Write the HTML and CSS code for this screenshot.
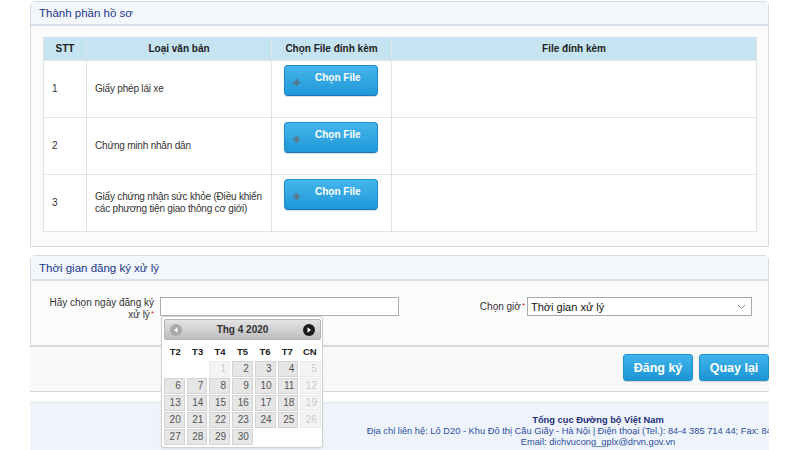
FILE: index.html
```html
<!DOCTYPE html>
<html lang="vi">
<head>
<meta charset="utf-8">
<title>Thành phần hồ sơ</title>
<link rel="stylesheet" href="styles.css">
</head>
<body>
<div class="page">
  <section class="panel panel-docs">
    <div class="panel-head">Thành phần hồ sơ</div>
    <div class="panel-body">
      <table class="docs">
        <thead>
          <tr>
            <th class="c-stt">STT</th>
            <th class="c-type">Loại văn bản</th>
            <th class="c-pick">Chọn File đính kèm</th>
            <th class="c-file">File đính kèm</th>
          </tr>
        </thead>
        <tbody>
          <tr>
            <td class="c-stt">1</td>
            <td class="c-type">Giấy phép lái xe</td>
            <td class="c-pick"><div class="btn-file" role="button"><svg class="plus" width="7" height="7" viewBox="0 0 7 7"><rect x="2.5" y="0" width="2" height="7"/><rect x="0" y="2.5" width="7" height="2"/></svg><span>Chọn File</span></div></td>
            <td class="c-file"></td>
          </tr>
          <tr>
            <td class="c-stt">2</td>
            <td class="c-type">Chứng minh nhân dân</td>
            <td class="c-pick"><div class="btn-file" role="button"><svg class="plus" width="7" height="7" viewBox="0 0 7 7"><rect x="2.5" y="0" width="2" height="7"/><rect x="0" y="2.5" width="7" height="2"/></svg><span>Chọn File</span></div></td>
            <td class="c-file"></td>
          </tr>
          <tr>
            <td class="c-stt">3</td>
            <td class="c-type">Giấy chứng nhận sức khỏe (Điều khiển các phương tiện giao thông cơ giới)</td>
            <td class="c-pick"><div class="btn-file" role="button"><svg class="plus" width="7" height="7" viewBox="0 0 7 7"><rect x="2.5" y="0" width="2" height="7"/><rect x="0" y="2.5" width="7" height="2"/></svg><span>Chọn File</span></div></td>
            <td class="c-file"></td>
          </tr>
        </tbody>
      </table>
    </div>
  </section>

  <section class="panel panel-time">
    <div class="panel-head">Thời gian đăng ký xử lý</div>
    <div class="panel-body form-row">
      <label class="lbl-date">Hãy chọn ngày đăng ký xử lý<span class="req">*</span></label>
      <div class="date-wrap">
        <input class="inp-date" type="text">
        <div class="calendar">
          <div class="cal-head">
            <span class="cal-nav prev"><svg width="12" height="12" viewBox="0 0 12 12"><circle cx="6" cy="6" r="6" fill="#a9a9a9"/><path d="M7.5 3.2 L4 6 L7.5 8.8 Z" fill="#fff"/></svg></span>
            <span class="cal-title">Thg 4 2020</span>
            <span class="cal-nav next"><svg width="12" height="12" viewBox="0 0 12 12"><circle cx="6" cy="6" r="6" fill="#1b1b1b"/><path d="M4.5 3.2 L8 6 L4.5 8.8 Z" fill="#fff"/></svg></span>
          </div>
          <div class="cal-days">
            <span>T2</span><span>T3</span><span>T4</span><span>T5</span><span>T6</span><span>T7</span><span>CN</span>
          </div>
          <div class="cal-grid">
            <span class="empty"></span><span class="empty"></span><span class="off">1</span><span>2</span><span>3</span><span>4</span><span class="off">5</span>
            <span>6</span><span>7</span><span>8</span><span>9</span><span>10</span><span>11</span><span class="off">12</span>
            <span>13</span><span>14</span><span>15</span><span>16</span><span>17</span><span>18</span><span class="off">19</span>
            <span>20</span><span>21</span><span>22</span><span>23</span><span>24</span><span>25</span><span class="off">26</span>
            <span>27</span><span>28</span><span>29</span><span>30</span><span class="empty"></span><span class="empty"></span><span class="empty"></span>
          </div>
        </div>
      </div>
      <label class="lbl-time">Chọn giờ<span class="req">*</span></label>
      <div class="sel-time"><span>Thời gian xử lý</span><svg width="9" height="6" viewBox="0 0 9 6"><path d="M1 1 L4.5 4.5 L8 1" fill="none" stroke="#888" stroke-width="1"/></svg></div>
    </div>
  </section>

  <div class="actions">
    <button class="btn-main">Đăng ký</button>
    <button class="btn-main">Quay lại</button>
  </div>

  <footer class="footer">
    <div class="footer-inner">
      <div class="f-title">Tổng cục Đường bộ Việt Nam</div>
      <div>Địa chỉ liên hệ: Lô D20 - Khu Đô thị Cầu Giấy - Hà Nội | Điện thoại (Tel.): 84-4 385 714 44; Fax: 84-4 385 714 40</div>
      <div>Email: dichvucong_gplx@drvn.gov.vn</div>
    </div>
  </footer>
</div>
</body>
</html>
```

FILE: styles.css
```css
html, body {
  margin: 0;
  padding: 0;
  background: #ffffff;
}
body {
  font-family: "Liberation Sans", Arial, sans-serif;
  font-size: 10px;
  color: #333333;
  overflow: hidden;
}
.page {
  margin-left: 30px;
  width: 739px;
  padding-top: 1px;
}
.panel {
  border: 1px solid #d3dbe5;
  border-radius: 5px 5px 0 0;
  background: #fbfbfb;
}
.panel-head {
  height: 22px;
  line-height: 23px;
  padding-left: 8px;
  background: #f3f6fa;
  border-bottom: 2px solid #d7dfe9;
  color: #22368a;
  font-size: 11.5px;
}
.panel-docs .panel-body {
  padding: 11px 11px 14px 12px;
}
table.docs {
  width: 714px;
  border-collapse: collapse;
  background: #ffffff;
}
table.docs th {
  background: #c5e3f1;
  height: 23px;
  padding: 0;
  font-weight: bold;
  font-size: 10px;
  color: #222;
  border: 1px solid #dfe6ea;
  border-top: none;
  text-align: center;
}
table.docs td {
  height: 56px;
  border: 1px solid #e3e3e3;
  padding: 0 1px 0 8px;
  vertical-align: middle;
  line-height: 12px;
  font-size: 10px;
}
table.docs td.c-type {
  letter-spacing: -0.2px;
}
.c-stt { width: 43px; box-sizing: border-box; }
.c-type { width: 185px; box-sizing: border-box; }
.c-pick { width: 120px; box-sizing: border-box; }
table.docs td.c-pick {
  vertical-align: top;
  padding: 4px 12px 0 12px;
}
.btn-file {
  position: relative;
  box-sizing: border-box;
  width: 94px;
  height: 31px;
  border: 1px solid #1d8fcc;
  border-bottom-color: #1679b3;
  border-radius: 4px;
  background: linear-gradient(#45b6ec, #1f97d8);
  color: #ffffff;
  font-weight: bold;
  font-size: 10px;
  padding-top: 6px;
  box-shadow: 0 1px 1px rgba(0,0,0,0.15);
}
.btn-file span {
  display: block;
  padding-left: 30px;
  line-height: 11px;
}
.btn-file .plus {
  position: absolute;
  left: 8px;
  top: 13px;
  fill: #5e7380;
}
.panel-time {
  margin-top: 8px;
}
.panel-time .panel-head {
  height: 23px;
  line-height: 25px;
}
.form-row {
  display: flex;
  align-items: flex-start;
  height: 48px;
  padding-top: 16px;
  padding-left: 18px;
}
.lbl-date {
  width: 105px;
  text-align: right;
  line-height: 11.5px;
  color: #333;
}
.req {
  color: #d01515;
  font-size: 8px;
  line-height: 8px;
  vertical-align: 2px;
  margin-left: 1px;
}
.date-wrap {
  position: relative;
  margin-left: 6px;
}
.inp-date {
  display: block;
  box-sizing: border-box;
  width: 239px;
  height: 19px;
  margin: 0;
  border: 1px solid #adadad;
  background: #fff;
}
.lbl-time {
  width: 126px;
  text-align: right;
  line-height: 19px;
}
.sel-time {
  box-sizing: border-box;
  margin-left: 2px;
  width: 225px;
  height: 19px;
  border: 1px solid #a9a9a9;
  background: #fff;
  display: flex;
  align-items: center;
  justify-content: space-between;
  padding: 0 5px 0 3px;
  font-size: 11px;
  color: #111;
}
.calendar {
  position: absolute;
  left: 1px;
  top: 19px;
  width: 162px;
  box-sizing: border-box;
  padding: 2px 1px 2px 2px;
  background: #ffffff;
  border: 1px solid #d0d0d0;
  border-radius: 3px;
  box-shadow: 0 1px 2px rgba(0,0,0,0.08);
  z-index: 5;
}
.cal-head {
  height: 19px;
  border: 1px solid #b4b4b4;
  border-radius: 2px;
  background: linear-gradient(#e4e4e4, #bdbdbd);
  display: flex;
  align-items: center;
  justify-content: space-between;
  padding: 0 5px;
}
.cal-nav { display: flex; }
.cal-title {
  font-weight: bold;
  font-size: 10px;
  color: #333;
}
.cal-days {
  display: grid;
  grid-template-columns: repeat(7, 1fr);
  height: 20px;
  align-items: center;
  text-align: center;
  font-weight: bold;
  font-size: 9.5px;
  color: #222;
  margin-top: 1px;
  width: 157px;
}
.cal-grid {
  display: grid;
  grid-template-columns: repeat(7, 1fr);
  column-gap: 2px;
  row-gap: 1px;
  width: 157px;
}
.cal-grid span {
  box-sizing: border-box;
  height: 16px;
  line-height: 14px;
  text-align: right;
  padding-right: 3px;
  font-size: 10px;
  color: #555;
  background: #e6e6e6;
  border: 1px solid #d3d3d3;
}
.cal-grid span.off {
  background: #f4f4f4;
  border-color: #ececec;
  color: #cccccc;
}
.cal-grid span.empty {
  background: transparent;
  border-color: transparent;
}
.actions {
  display: flex;
  justify-content: flex-end;
  gap: 6px;
  height: 46px;
  box-sizing: border-box;
  padding-top: 7px;
  background: #f9f9f9;
  border-top: 1px solid #d3d8de;
  border-bottom: 1px solid #d3d8de;
}
.btn-main {
  height: 27px;
  width: 70px;
  padding: 0;
  border: 1px solid #1e8fcd;
  border-radius: 3px;
  background: linear-gradient(#3fb3ea, #1d95d6);
  color: #ffffff;
  font-family: "Liberation Sans", Arial, sans-serif;
  font-weight: bold;
  font-size: 12.5px;
  box-shadow: 0 1px 1px rgba(0,0,0,0.15);
}
.footer {
  margin-top: 10px;
  height: 60px;
  overflow: hidden;
  background: #eff3fb;
  border-top: 1px solid #e2e8f2;
}
.footer-inner {
  width: 1136px;
  text-align: center;
  padding-top: 12px;
  font-size: 9.3px;
  line-height: 11px;
  color: #2d4f9e;
  white-space: nowrap;
}
.f-title {
  font-weight: bold;
  color: #1d2f7a;
}
```
